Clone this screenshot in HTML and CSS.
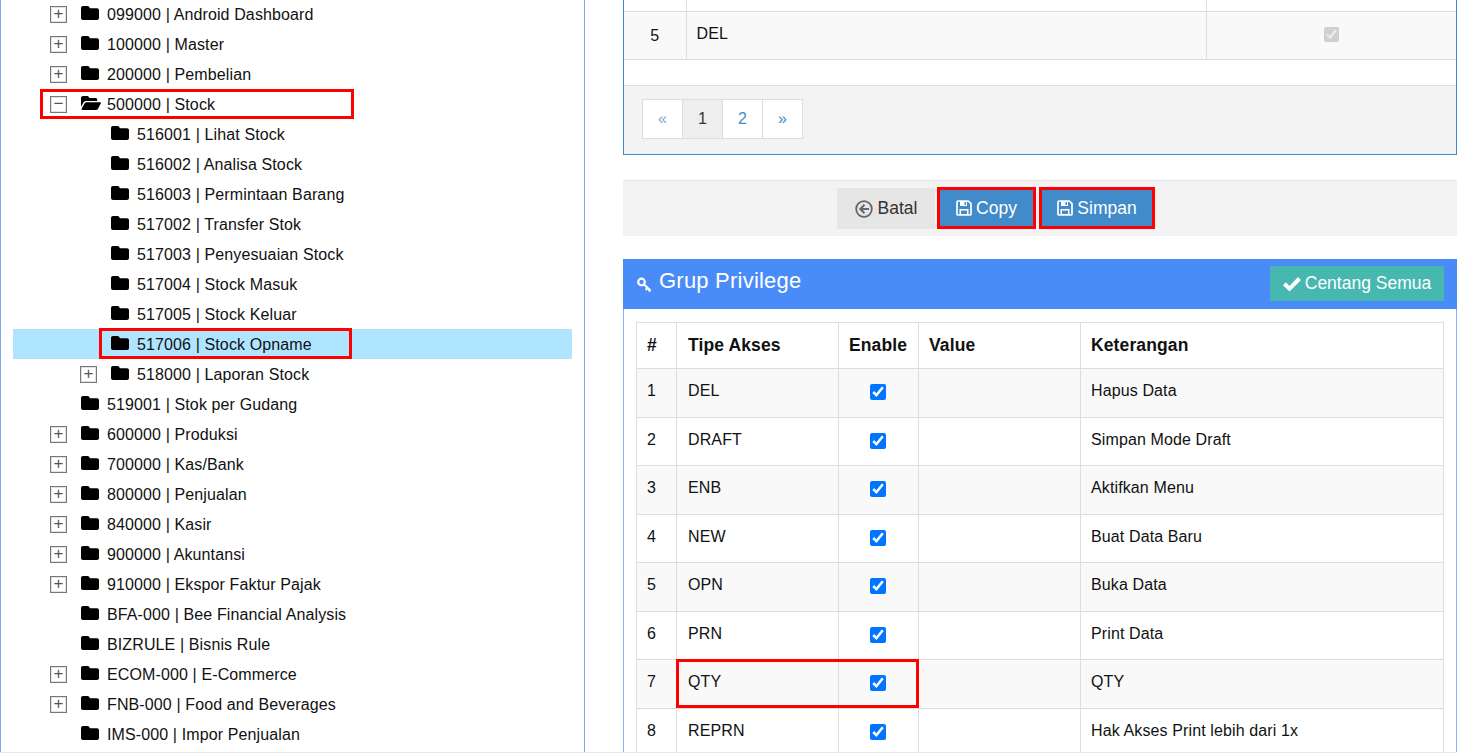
FILE: index.html
```html
<!DOCTYPE html>
<html lang="id">
<head>
<meta charset="utf-8">
<title>Grup Privilege</title>
<link rel="stylesheet" href="styles.css">
</head>
<body>
<svg class="defs" aria-hidden="true">
  <symbol id="folder" viewBox="0 0 18 16"><path d="M2 1h4.600c.8 0 1.200.4 1.600 1l.8 1.200H16c1.100 0 2 .9 2 2V13c0 1.100-.9 2-2 2H2c-1.100 0-2-.9-2-2V3c0-1.100.9-2 2-2z"/></symbol>
  <symbol id="folder-open" viewBox="0 0 20 16"><path d="M0 3c0-1.100.9-2 2-2h4.300c.7 0 1.100.3 1.500.9l.7 1.100h6c1 0 1.700.7 1.700 1.700V6H5.200C4 6 3.100 6.500 2.500 7.500L0 11.800z"/><path d="M5.400 7.200H19c.8 0 1.200.7.800 1.400l-2.900 5.300c-.4.700-1 1.100-1.800 1.100H1.500c-.8 0-1.200-.7-.8-1.400l3-5.300c.4-.7 1-1.100 1.700-1.100z"/></symbol>
  <symbol id="floppy" viewBox="0 0 16 16"><path fill="none" stroke="currentColor" stroke-width="1.700" d="M1 2c0-.6.4-1 1-1h10.300L15 3.700V14c0 .6-.4 1-1 1H2c-.6 0-1-.4-1-1z"/><path fill="currentColor" d="M4 1h7v5H4zM3.500 9h9v6h-9z"/><path fill="#428bca" d="M8.500 2h1.500v3H8.500zM5 10.500h6V14H5z"/></symbol>
</svg>

<div class="page">
  <nav class="side">
    <div class="tree">
      <div class="row l1"><span class="tg">+</span><svg class="fd"><use href="#folder"/></svg><span>099000 | Android Dashboard</span></div>
      <div class="row l1"><span class="tg">+</span><svg class="fd"><use href="#folder"/></svg><span>100000 | Master</span></div>
      <div class="row l1"><span class="tg">+</span><svg class="fd"><use href="#folder"/></svg><span>200000 | Pembelian</span></div>
      <div class="row l1"><span class="tg">−</span><svg class="fd open"><use href="#folder-open"/></svg><span>500000 | Stock</span><i class="mark mark-stock"></i></div>
      <div class="row l2"><span class="tg none"></span><svg class="fd"><use href="#folder"/></svg><span>516001 | Lihat Stock</span></div>
      <div class="row l2"><span class="tg none"></span><svg class="fd"><use href="#folder"/></svg><span>516002 | Analisa Stock</span></div>
      <div class="row l2"><span class="tg none"></span><svg class="fd"><use href="#folder"/></svg><span>516003 | Permintaan Barang</span></div>
      <div class="row l2"><span class="tg none"></span><svg class="fd"><use href="#folder"/></svg><span>517002 | Transfer Stok</span></div>
      <div class="row l2"><span class="tg none"></span><svg class="fd"><use href="#folder"/></svg><span>517003 | Penyesuaian Stock</span></div>
      <div class="row l2"><span class="tg none"></span><svg class="fd"><use href="#folder"/></svg><span>517004 | Stock Masuk</span></div>
      <div class="row l2"><span class="tg none"></span><svg class="fd"><use href="#folder"/></svg><span>517005 | Stock Keluar</span></div>
      <div class="row l2 sel"><span class="tg none"></span><svg class="fd"><use href="#folder"/></svg><span>517006 | Stock Opname</span><i class="mark mark-opname"></i></div>
      <div class="row l2"><span class="tg">+</span><svg class="fd"><use href="#folder"/></svg><span>518000 | Laporan Stock</span></div>
      <div class="row l1"><span class="tg none"></span><svg class="fd"><use href="#folder"/></svg><span>519001 | Stok per Gudang</span></div>
      <div class="row l1"><span class="tg">+</span><svg class="fd"><use href="#folder"/></svg><span>600000 | Produksi</span></div>
      <div class="row l1"><span class="tg">+</span><svg class="fd"><use href="#folder"/></svg><span>700000 | Kas/Bank</span></div>
      <div class="row l1"><span class="tg">+</span><svg class="fd"><use href="#folder"/></svg><span>800000 | Penjualan</span></div>
      <div class="row l1"><span class="tg">+</span><svg class="fd"><use href="#folder"/></svg><span>840000 | Kasir</span></div>
      <div class="row l1"><span class="tg">+</span><svg class="fd"><use href="#folder"/></svg><span>900000 | Akuntansi</span></div>
      <div class="row l1"><span class="tg">+</span><svg class="fd"><use href="#folder"/></svg><span>910000 | Ekspor Faktur Pajak</span></div>
      <div class="row l1"><span class="tg none"></span><svg class="fd"><use href="#folder"/></svg><span>BFA-000 | Bee Financial Analysis</span></div>
      <div class="row l1"><span class="tg none"></span><svg class="fd"><use href="#folder"/></svg><span>BIZRULE | Bisnis Rule</span></div>
      <div class="row l1"><span class="tg">+</span><svg class="fd"><use href="#folder"/></svg><span>ECOM-000 | E-Commerce</span></div>
      <div class="row l1"><span class="tg">+</span><svg class="fd"><use href="#folder"/></svg><span>FNB-000 | Food and Beverages</span></div>
      <div class="row l1"><span class="tg none"></span><svg class="fd"><use href="#folder"/></svg><span>IMS-000 | Impor Penjualan</span></div>
    </div>
  </nav>

  <main class="main">
    <section class="top-panel">
      <table class="top-table">
        <colgroup><col class="tc1"><col class="tc2"><col></colgroup>
        <tr class="stub"><td></td><td></td><td></td></tr>
        <tr class="tr5"><td class="num">5</td><td class="name">DEL</td><td class="chk"><input type="checkbox" checked disabled></td></tr>
      </table>
      <div class="blank"></div>
      <div class="pager-bar">
        <ul class="pager">
          <li class="off">«</li>
          <li class="cur">1</li>
          <li>2</li>
          <li>»</li>
        </ul>
      </div>
    </section>

    <div class="actions">
      <button class="btn gray">
        <svg class="ic" viewBox="0 0 18 18"><circle cx="9" cy="9" r="7.800" fill="none" stroke="#666" stroke-width="1.800"/><path fill="none" stroke="#666" stroke-width="2" d="M9.500 4.800 5.300 9l4.200 4.200M5.600 9H14"/></svg>Batal
      </button>
      <button class="btn blue"><svg class="ic2"><use href="#floppy"/></svg>Copy</button>
      <button class="btn blue"><svg class="ic2"><use href="#floppy"/></svg>Simpan</button>
    </div>

    <section class="priv">
      <header class="priv-head">
        <h2>
          <svg class="key" viewBox="0 0 16 16"><circle cx="5" cy="5" r="3.300" fill="none" stroke="#fff" stroke-width="2.200"/><path fill="none" stroke="#fff" stroke-width="2.200" d="m7.500 7.500 6.500 6M11 11l-1.800 2M13.500 13l-1.200 1.500"/></svg>Grup Privilege
        </h2>
        <button class="btn-all">
          <svg class="tick" viewBox="0 0 18 16"><path fill="#fff" d="M0 9.200 2.800 6.300l3.700 3.600L15 1l3 2.900L6.500 15.500z"/></svg>Centang Semua
        </button>
      </header>
      <div class="priv-body">
        <table class="priv-table">
          <colgroup><col class="p1"><col class="p2"><col class="p3"><col class="p4"><col></colgroup>
          <thead><tr><th>#</th><th>Tipe Akses</th><th>Enable</th><th>Value</th><th>Keterangan</th></tr></thead>
          <tbody>
            <tr><td>1</td><td>DEL</td><td class="c"><input type="checkbox" checked></td><td></td><td>Hapus Data</td></tr>
            <tr><td>2</td><td>DRAFT</td><td class="c"><input type="checkbox" checked></td><td></td><td>Simpan Mode Draft</td></tr>
            <tr><td>3</td><td>ENB</td><td class="c"><input type="checkbox" checked></td><td></td><td>Aktifkan Menu</td></tr>
            <tr><td>4</td><td>NEW</td><td class="c"><input type="checkbox" checked></td><td></td><td>Buat Data Baru</td></tr>
            <tr><td>5</td><td>OPN</td><td class="c"><input type="checkbox" checked></td><td></td><td>Buka Data</td></tr>
            <tr><td>6</td><td>PRN</td><td class="c"><input type="checkbox" checked></td><td></td><td>Print Data</td></tr>
            <tr><td>7</td><td>QTY</td><td class="c"><input type="checkbox" checked></td><td></td><td>QTY</td></tr>
            <tr><td>8</td><td>REPRN</td><td class="c"><input type="checkbox" checked></td><td></td><td>Hak Akses Print lebih dari 1x</td></tr>
          </tbody>
        </table>
        <i class="mark mark-qty"></i>
      </div>
    </section>
  </main>
</div>
</body>
</html>
```
FILE: styles.css
```css
* { box-sizing: border-box; }
html, body { margin: 0; padding: 0; height: 100%; overflow: hidden; background: #fff; }
body { font-family: "Liberation Sans", Arial, sans-serif; font-size: 16px; letter-spacing: 0.12px; color: #111; }
.defs { position: absolute; width: 0; height: 0; }

.page { display: flex; height: 753px; overflow: hidden; border-bottom: 1px solid #e8e8e8; }

/* tree */
.side { flex: 0 0 585px; border-left: 1px solid #7ea8f4; border-right: 1px solid #7ea8f4; padding-left: 12px; overflow: hidden; }
.tree { margin-top: -1px; width: 559px; }
.row { position: relative; display: flex; align-items: center; height: 30px; white-space: nowrap; }
.row span:last-of-type { margin-top: 2px; }
.l1 { padding-left: 37px; }
.l2 { padding-left: 67px; }
.sel { background: #b0e5ff; }
.tg { flex: 0 0 17px; width: 17px; height: 17px; margin-top: 0 !important; margin-right: 14px; border: 1px solid #777; box-shadow: inset 0 0 0 1px #e2e2e2; background: #fff; color: #555; font-size: 17px; line-height: 14px; text-align: center; }
.tg.none { border: 0; background: none; box-shadow: none; }
.fd { flex: 0 0 18px; width: 18px; height: 16px; margin: -3px 8px 0 0; fill: #000; }
.fd.open { flex-basis: 20px; width: 20px; margin-right: 6px; }

.mark { position: absolute; border: 3px solid #f00; pointer-events: none; }
.mark-stock { left: 27px; top: 0; width: 314px; height: 30px; }
.mark-opname { left: 86px; top: -1px; width: 253px; height: 31px; }
.mark-qty { left: 52px; top: 350px; width: 243px; height: 49px; }

/* right column */
.main { flex: 0 0 834px; margin-left: 38px; overflow: hidden; }

.top-panel { border: 1px solid #428bca; border-top: 0; height: 155px; display: flex; flex-direction: column; }
.top-table { width: 100%; border-collapse: collapse; table-layout: fixed; }
.tc1 { width: 62px; }
.tc2 { width: 520px; }
.top-table td { border: 1px solid #ddd; padding: 0; }
.top-table td:first-child { border-left: 0; }
.top-table td:last-child { border-right: 0; }
.top-table tr:first-child td { border-top: 0; }
.stub { height: 11px; }
.tr5 { height: 48px; background: #f9f9f9; }
.num { text-align: center; padding-top: 2px !important; }
.name { padding: 0 10px 2px !important; }
.chk { text-align: center; }
.chk input { width: 15px; height: 15px; margin: -2px 0 0; vertical-align: middle; }
.blank { height: 25px; }
.pager-bar { flex: 1; background: #f3f3f3; border-top: 1px solid #ddd; padding: 13px 18px; }
.pager { display: flex; list-style: none; margin: 0; padding: 0; }
.pager li { width: 41px; height: 40px; margin-left: -1px; border: 1px solid #ddd; background: #fff; color: #428bca; text-align: center; line-height: 38px; }
.pager li:first-child { margin-left: 0; }
.pager .off { color: #8aa6bd; }
.pager .cur { background: #eee; color: #333; }

.actions { display: flex; justify-content: center; gap: 2px; margin-top: 25px; height: 56px; padding: 6px 88px 0 0; background: #f3f3f3; border-top: 1px solid #e6e6e6; }
.btn { display: flex; align-items: center; justify-content: center; height: 42px; padding: 0; border: 3px solid #f00; font: 17.5px "Liberation Sans", Arial, sans-serif; color: #fff; background: #428bca; }
.btn.gray { width: 98px; height: 41px; margin-top: 1px; background: #e6e6e6; border: 0; color: #333; }
.btn.blue:nth-child(2) { width: 99px; }
.btn.blue:nth-child(3) { width: 116px; margin-left: 1px; }
.ic { width: 18px; height: 18px; margin-right: 5px; }
.ic2 { width: 16px; height: 16px; margin-right: 4px; color: #fff; }

.priv { margin-top: 23px; height: 500px; border-left: 1px solid #8db1f0; border-right: 1px solid #8db1f0; }
.priv-head { display: flex; align-items: center; justify-content: space-between; height: 50px; margin: 0 -1px; padding: 0 13px; background: #4a8cf7; color: #fff; }
.priv-head h2 { display: flex; align-items: center; margin: -6px 0 0; font-size: 22px; font-weight: 400; letter-spacing: 0.22px; }
.key { width: 17px; height: 16px; margin: 8px 6px 0 0; }
.btn-all { display: flex; align-items: center; justify-content: center; width: 174px; height: 35px; margin-top: -1px; padding: 0; border: 0; background: #46b8b0; color: #fff; font: 17.5px "Liberation Sans", Arial, sans-serif; }
.tick { width: 18px; height: 16px; margin-right: 4px; }
.priv-body { position: relative; padding: 13px 12px; }
.priv-table { width: 808px; border-collapse: collapse; table-layout: fixed; }
.p1 { width: 40px; }
.p2 { width: 162px; }
.p3 { width: 80px; }
.p4 { width: 162px; }
.priv-table th, .priv-table td { border: 1px solid #ddd; padding: 0 10px; text-align: left; }
.priv-table thead tr { height: 46px; }
.priv-table th { font-size: 17.5px; font-weight: 700; padding-bottom: 1px; }
.priv-table th:nth-child(2), .priv-table td:nth-child(2) { padding-left: 11px; }
.priv-table tbody tr { height: 48.5px; }
.priv-table td { padding-bottom: 3.500px; }
.priv-table tbody tr:nth-child(odd) { background: #f9f9f9; }
.priv-table .c { text-align: center; padding: 0; }
.c input { width: 16px; height: 16px; margin: -3px 1px 0 0; vertical-align: middle; }
```
